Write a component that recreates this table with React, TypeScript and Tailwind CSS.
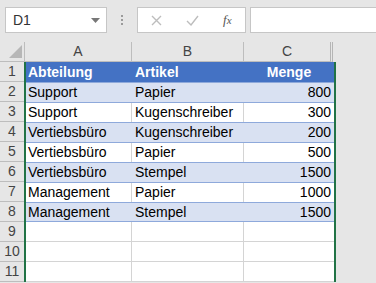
import React from 'react';

type Row = [string, string, string];

const rows: Row[] = [
    ['Support', 'Papier', '800'],
    ['Support', 'Kugenschreiber', '300'],
    ['Vertiebsbüro', 'Kugenschreiber', '200'],
    ['Vertiebsbüro', 'Papier', '500'],
    ['Vertiebsbüro', 'Stempel', '1500'],
    ['Management', 'Papier', '1000'],
    ['Management', 'Stempel', '1500'],
];

const font = { fontFamily: '"Liberation Sans", Arial, sans-serif' };

const RowHeader: React.FC<{ n: number }> = ({ n }) => (
    <div className="w-[24px] shrink-0 bg-[#e6e6e6] border-b border-[#bdbdbd] flex items-center justify-center text-[14px] text-[#444]">
        {n}
    </div>
);

const Toolbar: React.FC = () => (
    <div className="h-[42px] flex items-start pt-[7px] pl-[5px]">
        <div className="w-[102px] h-[26px] bg-white border border-[#c6c6c6] flex items-center pl-[7px] pr-[6px]">
            <span className="text-[14px] text-[#333] flex-1">D1</span>
            <svg width="9" height="5" viewBox="0 0 9 5"><path d="M0 0h9L4.5 5z" fill="#777" /></svg>
        </div>
        <div className="w-[30px] h-[26px] flex flex-col items-center justify-center gap-[2px]">
            <span className="w-[2px] h-[2px] bg-[#9a9a9a]" />
            <span className="w-[2px] h-[2px] bg-[#9a9a9a]" />
            <span className="w-[2px] h-[2px] bg-[#9a9a9a]" />
        </div>
        <div className="w-[109px] h-[26px] bg-white border border-[#c6c6c6] flex items-center">
            <svg className="ml-[13px]" width="11" height="11" viewBox="0 0 11 11">
                <path d="M1 1l9 9M10 1l-9 9" stroke="#bdbdbd" strokeWidth="1.4" />
            </svg>
            <svg className="ml-[24px]" width="13" height="11" viewBox="0 0 13 11">
                <path d="M1 6l4 4 7-9" stroke="#bdbdbd" strokeWidth="1.4" fill="none" />
            </svg>
            <span className="ml-[24px] text-[13px] italic text-[#555]" style={{ fontFamily: '"Liberation Serif", serif' }}>
                f<span className="text-[11px]">x</span>
            </span>
        </div>
        <div className="ml-[4px] flex-1 h-[26px] bg-white border border-[#c6c6c6] border-r-0" />
    </div>
);

export default function App() {
    return (
        <div className="w-[376px] h-[283px] overflow-hidden bg-[#e6e6e6] text-black" style={font}>
            <Toolbar />
            {/* column headers */}
            <div className="h-[20px] flex text-[14px] text-[#444]">
                <div className="w-[25px] shrink-0 border-r border-b border-[#bdbdbd] flex items-end justify-end">
                    <svg width="13" height="13" viewBox="0 0 13 13" className="mb-[3px] mr-[2px]">
                        <path d="M13 0v13H0z" fill="#b7b7b7" />
                    </svg>
                </div>
                <div className="w-[107px] shrink-0 border-r border-[#bdbdbd] border-b flex items-center justify-center">A</div>
                <div className="w-[112px] shrink-0 border-r border-[#bdbdbd] border-b flex items-center justify-center">B</div>
                <div className="w-[89px] shrink-0 border-r-[3px] border-double border-[#b5b5b5] flex items-center justify-center border-b-[#bdbdbd] border-b">C</div>
            </div>
            {/* header row of the table */}
            <div className="h-[20px] flex">
                <RowHeader n={1} />
                <div className="w-[2px] bg-[#217346]" />
                <div className="w-[308px] bg-[#4472c4] flex text-white font-bold text-[14px] items-center">
                    <div className="w-[106px] pl-[2px]">Abteilung</div>
                    <div className="w-[112px] pl-[3px]">Artikel</div>
                    <div className="w-[90px] text-center">Menge</div>
                </div>
                <div className="w-[2px] bg-[#217346]" />
            </div>
            {rows.map((r, i) => {
                const banded = i % 2 === 0;
                const last = i === rows.length - 1;
                return (
                    <div key={i} className="h-[20px] flex">
                        <RowHeader n={i + 2} />
                        <div className="w-[2px] bg-[#217346]" />
                        <div
                            className={`w-[308px] flex text-[14px] items-center border-t border-[#8ea9db] ${
                                banded ? 'bg-[#d9e1f2]' : 'bg-white'
                            } ${last ? 'border-b' : ''}`}
                        >
                            <div className={`w-[106px] h-full flex items-center pl-[2px] ${banded ? '' : 'border-r border-[#d4d4d4]'}`}>
                                {r[0]}
                            </div>
                            <div className={`w-[112px] h-full flex items-center pl-[3px] ${banded ? '' : 'border-r border-[#d4d4d4]'}`}>
                                {r[1]}
                            </div>
                            <div className="w-[90px] h-full flex items-center justify-end pr-[3px]">{r[2]}</div>
                        </div>
                        <div className="w-[2px] bg-[#217346]" />
                    </div>
                );
            })}
            {[9, 10, 11].map((n) => (
                <div key={n} className="h-[20px] flex">
                    <RowHeader n={n} />
                    <div className="w-[2px] bg-[#217346]" />
                    <div className="w-[308px] flex bg-white">
                        <div className="w-[106px] border-r border-b border-[#d4d4d4]" />
                        <div className="w-[112px] border-r border-b border-[#d4d4d4]" />
                        <div className="w-[90px] border-b border-[#d4d4d4]" />
                    </div>
                    <div className="w-[2px] bg-[#217346]" />
                </div>
            ))}
        </div>
    );
}
